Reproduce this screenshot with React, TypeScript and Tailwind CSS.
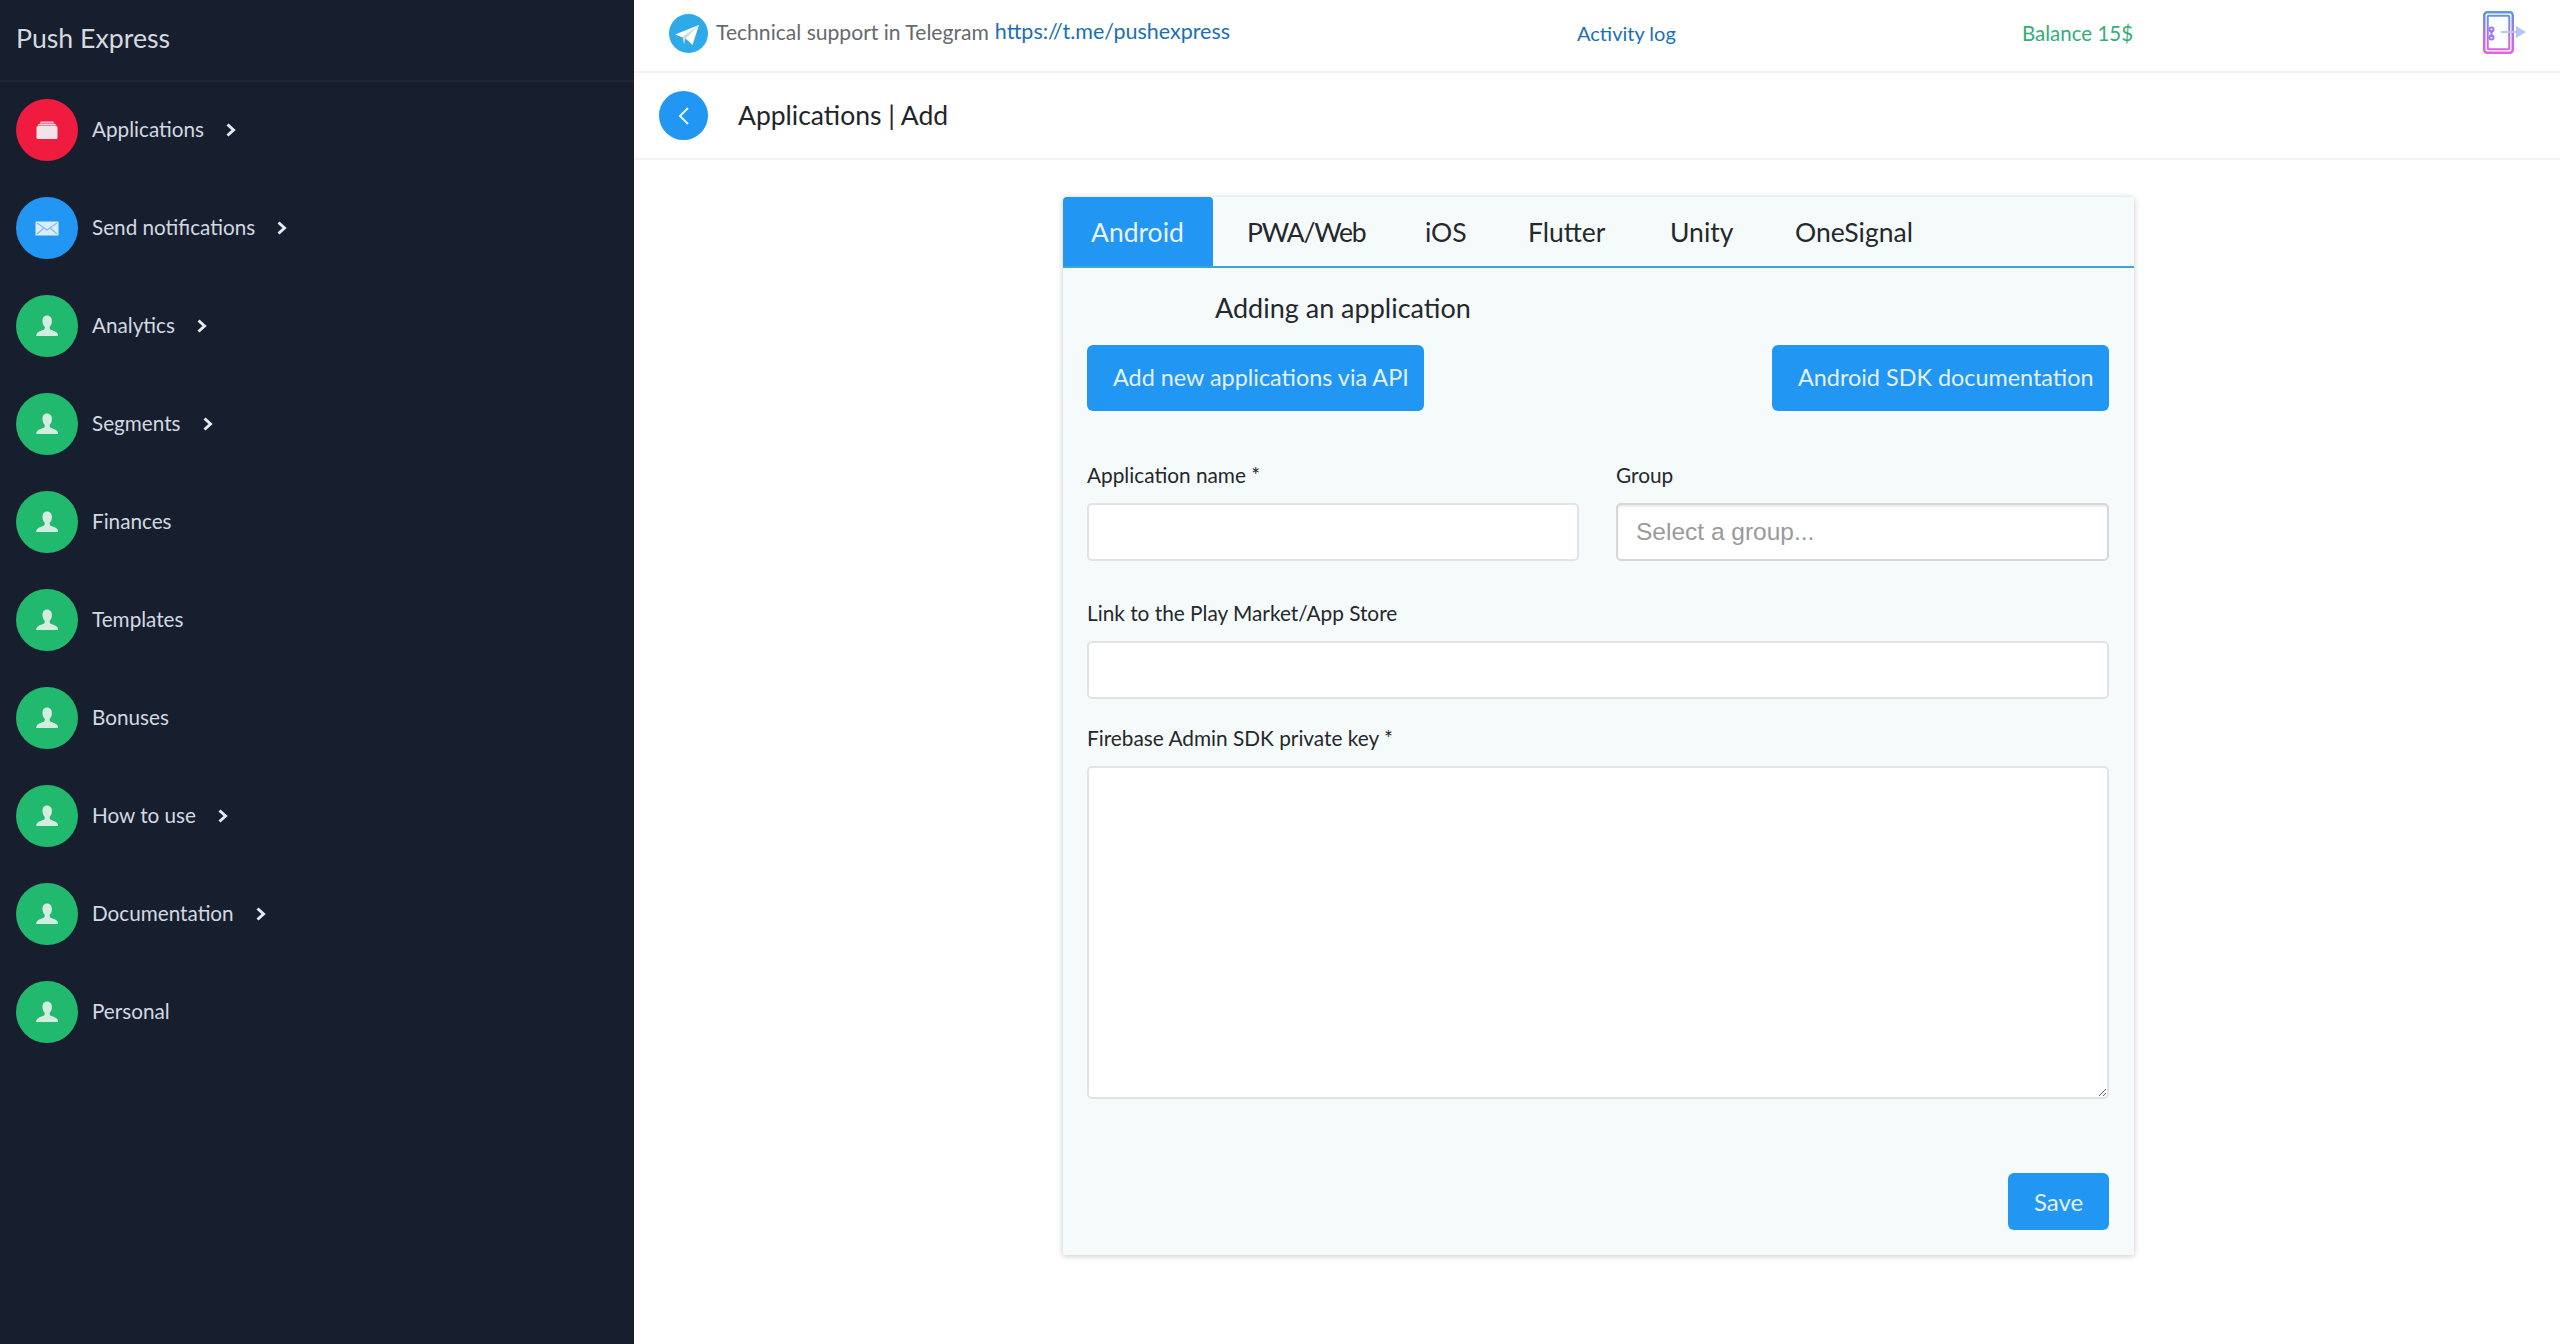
import { ReactNode } from "react";

const font = "font-['Lato','Noto_Sans',sans-serif]";

function UserIcon() {
  return (
    <svg width="22" height="22" viewBox="0 0 22 22" fill="#d3eee1">
      <path d="M11 0.5c3.2 0 4.9 2.4 4.9 5.4 0 2.4-.9 4.6-2.3 6 0 1.6.3 2.6 1.9 3.2 2.300.9 5.300 2 6.300 3.800.3.6.4 1.300.4 2.100H.2c0-.8.1-1.500.4-2.100 1-1.800 4-2.900 6.300-3.800 1.600-.6 1.900-1.600 1.900-3.200-1.400-1.400-2.300-3.600-2.300-6C6.500 2.900 7.800.5 11 .5z" />
    </svg>
  );
}

function FolderIcon() {
  return (
    <svg width="22" height="18" viewBox="0 0 22 18">
      <path d="M5 0.500h12l1.500 2H3.500z" fill="#f1c6d0" />
      <path d="M2.500 3h17l1 1.500H1.500z" fill="#f5d5dc" />
      <rect x="0.500" y="5" width="21" height="13" rx="1.500" fill="#f1e3e8" />
    </svg>
  );
}

function MailIcon() {
  return (
    <svg width="24" height="15" viewBox="0 0 24 15">
      <rect x="0.500" y="0.500" width="23" height="14" rx="0.500" fill="#d9edfc" />
      <path d="M2 2l10 7 10-7M2 13l7-6M22 13l-7-6" fill="none" stroke="#7dbdf0" strokeWidth="1.200" />
    </svg>
  );
}

function Chevron() {
  return (
    <svg width="11" height="14" viewBox="0 0 11 14" fill="none">
      <path d="M2.500 1.500L8.500 7l-6 5.500" stroke="#e6e9ee" strokeWidth="3" />
    </svg>
  );
}

function TelegramIcon() {
  return (
    <svg width="39" height="39" viewBox="0 0 39 39">
      <circle cx="19.500" cy="19.500" r="19.500" fill="#2ea9ea" />
      <path d="M6 20.500L30 11l-6.500 20-7-6.500z" fill="#ffffff" />
      <path d="M30 11L13.500 23l1.500 7.500 1.500-6z" fill="#cfd8dc" />
    </svg>
  );
}

function ExitIcon() {
  return (
    <svg width="44" height="44" viewBox="0 0 44 44" fill="none">
      <defs>
        <linearGradient id="door" x1="0" y1="0" x2="0" y2="1">
          <stop offset="0" stopColor="#5f94ea" />
          <stop offset="1" stopColor="#e45fe4" />
        </linearGradient>
      </defs>
      <rect x="1.250" y="1.250" width="28.500" height="40.500" rx="3" stroke="url(#door)" strokeWidth="2.500" />
      <rect x="4.750" y="4.750" width="21.500" height="33.500" rx="1" stroke="url(#door)" strokeWidth="2" />
      <path d="M8.500 19v7" stroke="#9a7be8" strokeWidth="2" />
      <circle cx="8.500" cy="18.500" r="2" stroke="#9a7be8" strokeWidth="2" />
      <circle cx="8.500" cy="26.500" r="2" stroke="#9a7be8" strokeWidth="2" />
      <path d="M18 20h15v-5l10 6-10 6v-5H18z" fill="#b5c5f5" />
    </svg>
  );
}

type NavItem = { label: string; color: string; icon: ReactNode; arrow: boolean };

const nav: NavItem[] = [
  { label: "Applications", color: "bg-[#f01c3f]", icon: <FolderIcon />, arrow: true },
  { label: "Send notifications", color: "bg-[#2196f3]", icon: <MailIcon />, arrow: true },
  { label: "Analytics", color: "bg-[#21b96e]", icon: <UserIcon />, arrow: true },
  { label: "Segments", color: "bg-[#21b96e]", icon: <UserIcon />, arrow: true },
  { label: "Finances", color: "bg-[#21b96e]", icon: <UserIcon />, arrow: false },
  { label: "Templates", color: "bg-[#21b96e]", icon: <UserIcon />, arrow: false },
  { label: "Bonuses", color: "bg-[#21b96e]", icon: <UserIcon />, arrow: false },
  { label: "How to use", color: "bg-[#21b96e]", icon: <UserIcon />, arrow: true },
  { label: "Documentation", color: "bg-[#21b96e]", icon: <UserIcon />, arrow: true },
  { label: "Personal", color: "bg-[#21b96e]", icon: <UserIcon />, arrow: false },
];

const tabs = [
  { label: "PWA/Web", width: "w-[178px] tracking-[-1.200px]" },
  { label: "iOS", width: "w-[103px]" },
  { label: "Flutter", width: "w-[142px]" },
  { label: "Unity", width: "w-[125px]" },
  { label: "OneSignal", width: "w-[130px]" },
];

function Sidebar() {
  return (
    <aside className="flex w-[634px] shrink-0 flex-col bg-[#171f2e]">
      <div className="flex h-[82px] items-center border-b-2 border-[#1e2736] pl-4 pb-1 text-[26.700px] text-[#d5d9df]">
        Push Express
      </div>
      <nav className="flex flex-col gap-[36px] pt-[17px] pl-4">
        {nav.map((item) => (
          <div key={item.label} className="flex h-[62px] items-center">
            <div className={`flex size-[62px] items-center justify-center rounded-full ${item.color}`}>
              {item.icon}
            </div>
            <span className="ml-[14px] text-[20.700px] text-[#d3d8e0]">{item.label}</span>
            {item.arrow && (
              <span className="ml-[21px]">
                <Chevron />
              </span>
            )}
          </div>
        ))}
      </nav>
    </aside>
  );
}

function Header() {
  return (
    <header className="flex h-[73px] items-center border-b-2 border-[#f2f2f2] pb-[5px] text-[20px]">
      <div className="flex w-[943px] items-center pl-[35px] text-[21.500px]">
        <TelegramIcon />
        <span className="mb-[3px] ml-[8px] text-[21.100px] text-[#666a6e]">Technical support in Telegram</span>
        <span className="mb-[3px] ml-[6px] text-[#1b6fb5]">https://t.me/pushexpress</span>
      </div>
      <div className="w-[445px] text-[#1b6fb5]">Activity log</div>
      <div className="w-[461px] text-[20.500px] text-[#35ad76]">Balance 15$</div>
      <ExitIcon />
    </header>
  );
}

function Field({ label, children }: { label: string; children: ReactNode }) {
  return (
    <div className="flex flex-col">
      <label className="mb-[15px] h-[26px] text-[20.800px] leading-[26px] text-[#25282c]">{label}</label>
      {children}
    </div>
  );
}

const inputClass = "w-full rounded-[5px] border-2 border-[#e1e4e6] bg-white outline-none";

function AddForm() {
  return (
    <section className="mt-[37px] ml-[429px] w-[1071px] bg-[#f5fafb] shadow-[0_1px_6px_rgba(0,0,0,0.22)]">
      <div className="flex h-[71px] items-stretch border-b-2 border-[#3ba5d8] text-[26.500px] text-[#25282c]">
        <div className="flex w-[150px] items-center rounded-t-[4px] bg-[#2196f3] pt-[2px] pl-[28px] text-[#e8f4fd]">Android</div>
        <div className="flex pt-[2px] pl-[34px]">
          {tabs.map((tab) => (
            <div key={tab.label} className={`flex items-center ${tab.width}`}>
              {tab.label}
            </div>
          ))}
        </div>
      </div>
      <div className="pr-[25px] pl-[24px]">
        <h2 className="mt-[22px] ml-[128px] h-[36px] text-[27px] leading-[36px] text-[#25282c]">Adding an application</h2>
        <div className="mt-[19px] flex justify-between text-[23.400px] text-[#e2f1fd]">
          <button className="h-[66px] w-[337px] rounded-[6px] bg-[#2196f3] pl-[26px] text-left">
            Add new applications via API
          </button>
          <button className="h-[66px] w-[337px] rounded-[6px] bg-[#2196f3] pl-[26px] text-left">
            Android SDK documentation
          </button>
        </div>
        <div className="mt-[51px] grid grid-cols-[492px_493px] gap-x-[37px]">
          <Field label="Application name *">
            <input className={`h-[58px] ${inputClass}`} />
          </Field>
          <Field label="Group">
            <div className="flex h-[58px] items-center rounded-[5px] border-2 border-[#d5d7d9] bg-white pl-[18px] font-['Liberation_Sans',sans-serif] text-[24.500px] text-[#9a9a9a] shadow-[inset_0_2px_2px_rgba(0,0,0,0.07)]">
              Select a group...
            </div>
          </Field>
        </div>
        <div className="mt-[39px]">
          <Field label="Link to the Play Market/App Store">
            <input className={`h-[58px] ${inputClass}`} />
          </Field>
        </div>
        <div className="mt-[26px]">
          <Field label="Firebase Admin SDK private key *">
            <textarea className={`block h-[333px] ${inputClass}`} />
          </Field>
        </div>
        <div className="mt-[74px] flex justify-end pb-[25px]">
          <button className="h-[57px] w-[101px] rounded-[6px] bg-[#2196f3] text-[24px] text-[#e2f1fd]">Save</button>
        </div>
      </div>
    </section>
  );
}

export default function App() {
  return (
    <div className={`flex h-[1344px] w-[2560px] overflow-hidden bg-white ${font}`}>
      <Sidebar />
      <main className="flex-1">
        <Header />
        <div className="flex h-[87px] items-center border-b-2 border-[#f2f2f2] pl-[25px]">
          <div className="flex size-[49px] items-center justify-center rounded-full bg-[#2196f3]">
            <svg width="14" height="20" viewBox="0 0 14 20" fill="none">
              <path d="M11 2L3 10l8 8" stroke="#e3f2fd" strokeWidth="2" />
            </svg>
          </div>
          <h1 className="ml-[30px] text-[26.500px] text-[#22252a]">Applications | Add</h1>
        </div>
        <AddForm />
      </main>
    </div>
  );
}
